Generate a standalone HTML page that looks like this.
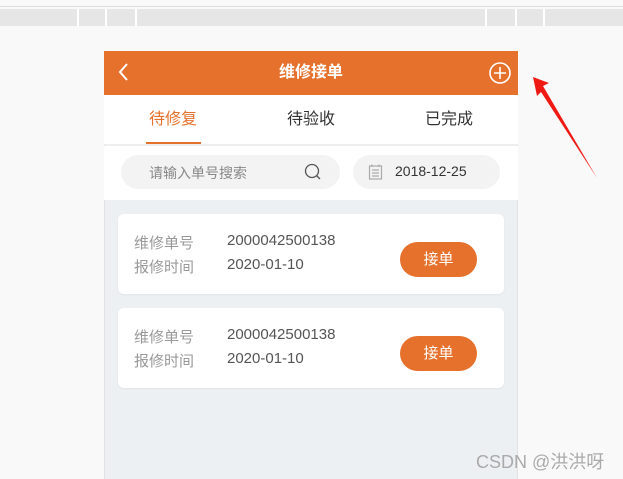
<!DOCTYPE html>
<html><head><meta charset="utf-8"><style>
*{margin:0;padding:0;box-sizing:border-box}
body{width:623px;height:479px;overflow:hidden;background:#f9f9f9;position:relative;font-family:"Liberation Sans","Noto Sans CJK SC",sans-serif}
.abs{position:absolute}
.bar{left:0;top:9px;width:623px;height:17px;background:#e6e6e6}
.sep{top:9px;width:2px;height:17px;background:#fff}
.frame{left:104px;top:51px;width:414px;height:428px;background:#edf0f3;border-left:1px solid #e2e2e2;border-right:1px solid #e2e2e2}
.hdr{left:104px;top:51px;width:414px;height:44px;background:#e5712c;color:#fff;font-weight:bold;font-size:16px;text-align:center;line-height:44px}
.tabs{left:104px;top:95px;width:414px;height:50px;background:#fff;border-bottom:1px solid #eee}
.tab{top:95px;font-size:16px;line-height:50px;color:#333}
.srow{left:104px;top:146px;width:414px;height:54px;background:#fff}
.pill{background:#f3f3f3;border-radius:17px;height:34px;top:155px}
.card{left:118px;width:386px;height:80px;background:#fff;border-radius:6px;box-shadow:0 1px 2px rgba(0,0,0,.05)}
.lbl{left:16px;font-size:15px;color:#999}
.val{left:109px;font-size:15px;color:#555}
.btn{left:282px;top:28px;width:77px;height:35px;border-radius:18px;background:#e5712c;color:#fff;font-size:15px;text-align:center;line-height:35px}
</style></head><body>
<div class="abs" style="left:0;top:6px;width:623px;height:1px;background:#ddd"></div>
<div class="abs bar"></div>
<div class="abs sep" style="left:77px"></div><div class="abs sep" style="left:105px"></div><div class="abs sep" style="left:135px"></div>
<div class="abs sep" style="left:485px"></div><div class="abs sep" style="left:515px"></div><div class="abs sep" style="left:543px"></div>
<div class="abs frame"></div>
<div class="abs hdr">维修接单</div>
<svg class="abs" style="left:116px;top:62px" width="14" height="20"><path d="M11 2 L4 10 L11 18" stroke="#fff" stroke-width="2" fill="none"/></svg>
<svg class="abs" style="left:488px;top:61px" width="24" height="24"><circle cx="12" cy="12" r="10" stroke="#fff" stroke-width="1.6" fill="none"/><path d="M12 6V18M6 12H18" stroke="#fff" stroke-width="1.6"/></svg>
<div class="abs tabs"></div>
<div class="abs tab" style="left:149px;color:#e5712c">待修复</div>
<div class="abs" style="left:146px;top:142px;width:55px;height:2px;background:#e5712c"></div>
<div class="abs tab" style="left:287px">待验收</div>
<div class="abs tab" style="left:425px">已完成</div>
<div class="abs srow"></div>
<div class="abs pill" style="left:121px;width:219px"></div>
<div class="abs" style="left:149px;top:163px;font-size:14px;color:#888">请输入单号搜索</div>
<svg class="abs" style="left:304px;top:163px" width="18" height="18"><circle cx="8" cy="8" r="6.5" stroke="#555" stroke-width="1.3" fill="none"/><path d="M12.5 12.5L16 16" stroke="#555" stroke-width="1.3"/></svg>
<div class="abs pill" style="left:353px;width:147px"></div>
<svg class="abs" style="left:368px;top:163px" width="16" height="18"><rect x="1.5" y="3" width="12" height="13" stroke="#aaa" stroke-width="1.2" fill="none"/><path d="M4 1.5V4M11 1.5V4M4 7H11M4 10H11M4 13H11" stroke="#aaa" stroke-width="1.2"/></svg>
<div class="abs" style="left:395px;top:163px;font-size:14px;color:#333">2018-12-25</div>
<div class="abs card" style="top:214px">
<div class="abs lbl" style="top:18px">维修单号</div><div class="abs val" style="top:18px">2000042500138</div>
<div class="abs lbl" style="top:42px">报修时间</div><div class="abs val" style="top:42px">2020-01-10</div>
<div class="abs btn">接单</div></div>
<div class="abs card" style="top:308px">
<div class="abs lbl" style="top:18px">维修单号</div><div class="abs val" style="top:18px">2000042500138</div>
<div class="abs lbl" style="top:42px">报修时间</div><div class="abs val" style="top:42px">2020-01-10</div>
<div class="abs btn">接单</div></div>
<svg class="abs" style="left:0;top:0" width="623" height="479"><polygon points="533,77 549,83 543,86 597,178 541,92 537,96" fill="#f01a14"/></svg>
<div class="abs" style="left:476px;top:448px;font-size:18px;color:#aaa">CSDN @洪洪呀</div>
</body></html>
